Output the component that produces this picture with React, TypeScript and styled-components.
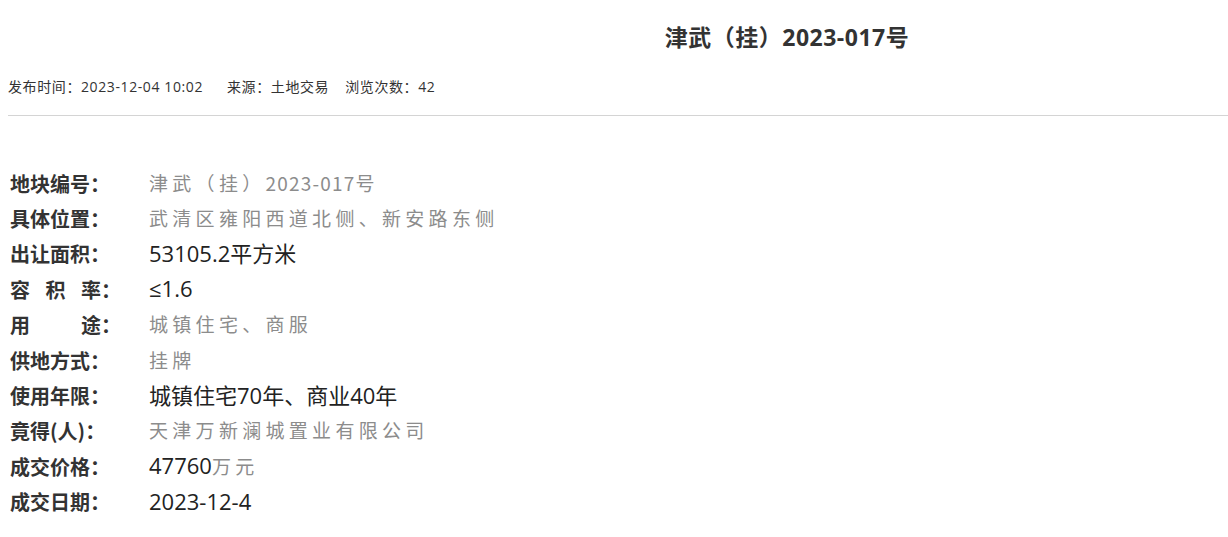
import React from "react";
import styled, { createGlobalStyle } from "styled-components";

const GlobalStyle = createGlobalStyle`
  html, body {
    margin: 0;
    padding: 0;
    background: #fff;
  }
  body {
    font-family: "Open Sans", "Noto Sans CJK SC", sans-serif;
    color: #333;
  }
`;

const Page = styled.div`
  padding: 22px 0 0 8px;
`;

const Title = styled.h1`
  margin: 0;
  padding-left: 338px;
  text-align: center;
  font-size: 23px;
  letter-spacing: 0.5px;
  line-height: 30px;
  font-weight: bold;
  color: #333;
`;

const Meta = styled.div`
  display: flex;
  margin-top: 25px;
  font-size: 14px;
  letter-spacing: 0.6px;
  line-height: 20px;
  color: #333;
`;

const MetaItem = styled.span<{ gap: number }>`
  margin-right: ${(p) => p.gap}px;
`;

const Divider = styled.hr`
  margin: 18px 0 0;
  border: none;
  border-top: 1px solid #d4d4d4;
`;

const InfoList = styled.dl`
  display: grid;
  grid-template-columns: 139px 1fr;
  grid-auto-rows: 35.4px;
  align-items: center;
  margin: 50px 0 0;
  padding-left: 2px;
`;

const Label = styled.dt`
  display: flex;
  margin: 0;
  font-family: "Noto Sans CJK SC", sans-serif;
  font-size: 20px;
  line-height: 26px;
  font-weight: bold;
  color: #333;
`;

const Spread = styled.span`
  display: flex;
  justify-content: space-between;
  width: 91px;
`;

const Value = styled.dd`
  margin: 0;
  line-height: 26px;
  white-space: nowrap;
`;

const Muted = styled.span`
  font-family: "Noto Sans CJK SC", sans-serif;
  font-size: 19px;
  letter-spacing: 4.3px;
  color: #8c8c8c;
`;

const MutedNum = styled.span`
  font-family: "Noto Sans CJK SC", sans-serif;
  font-size: 19px;
  letter-spacing: 1.2px;
  color: #8c8c8c;
`;

const Plain = styled.span`
  font-size: 22px;
  color: #222;
`;

type Row = { label: string; spread?: boolean; value: React.ReactNode };

const rows: Row[] = [
  {
    label: "地块编号",
    value: (
      <>
        <Muted>津武（挂）</Muted>
        <MutedNum>2023-017</MutedNum>
        <Muted>号</Muted>
      </>
    ),
  },
  { label: "具体位置", value: <Muted>武清区雍阳西道北侧、新安路东侧</Muted> },
  { label: "出让面积", value: <Plain>53105.2平方米</Plain> },
  { label: "容积率", spread: true, value: <Plain>≤1.6</Plain> },
  { label: "用途", spread: true, value: <Muted>城镇住宅、商服</Muted> },
  { label: "供地方式", value: <Muted>挂牌</Muted> },
  { label: "使用年限", value: <Plain>城镇住宅70年、商业40年</Plain> },
  { label: "竟得(人)", value: <Muted>天津万新澜城置业有限公司</Muted> },
  {
    label: "成交价格",
    value: (
      <>
        <Plain>47760</Plain>
        <Muted>万元</Muted>
      </>
    ),
  },
  { label: "成交日期", value: <Plain>2023-12-4</Plain> },
];

const App = () => {
  return (
    <Page>
      <GlobalStyle />
      <Title>津武（挂）2023-017号</Title>
      <Meta>
        <MetaItem gap={24}>发布时间：2023-12-04 10:02</MetaItem>
        <MetaItem gap={16}>来源：土地交易</MetaItem>
        <MetaItem gap={0}>浏览次数：42</MetaItem>
      </Meta>
      <Divider />
      <InfoList>
        {rows.map((row) => (
          <React.Fragment key={row.label}>
            <Label>
              {row.spread ? (
                <Spread>
                  {row.label.split("").map((c, i) => (
                    <span key={i}>{c}</span>
                  ))}
                </Spread>
              ) : (
                row.label
              )}
              ：
            </Label>
            <Value>{row.value}</Value>
          </React.Fragment>
        ))}
      </InfoList>
    </Page>
  );
};

export default App;
